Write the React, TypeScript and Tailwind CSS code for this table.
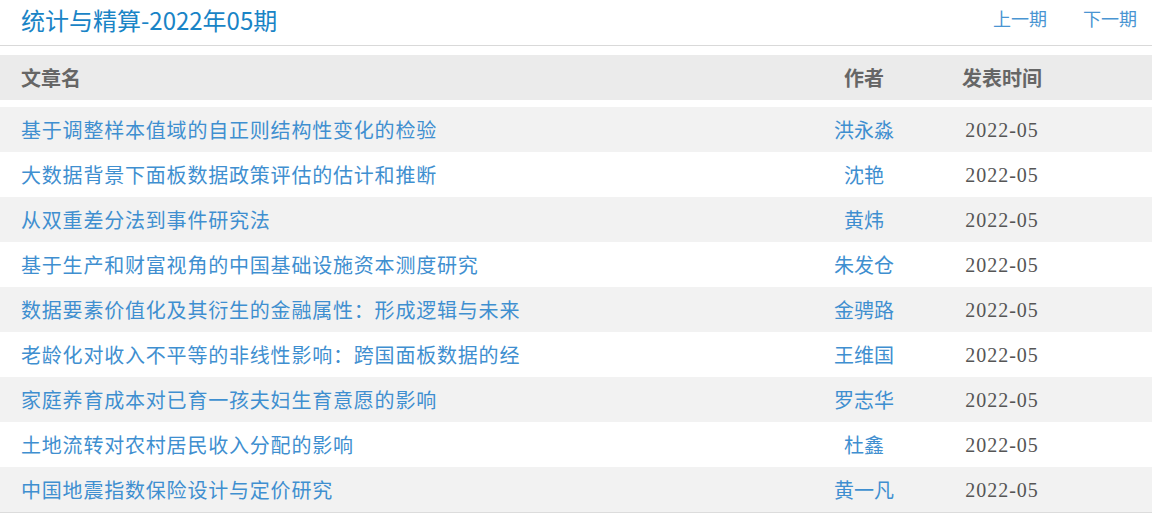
const rows = [
  { title: '基于调整样本值域的自正则结构性变化的检验', author: '洪永淼', date: '2022-05' },
  { title: '大数据背景下面板数据政策评估的估计和推断', author: '沈艳', date: '2022-05' },
  { title: '从双重差分法到事件研究法', author: '黄炜', date: '2022-05' },
  { title: '基于生产和财富视角的中国基础设施资本测度研究', author: '朱发仓', date: '2022-05' },
  { title: '数据要素价值化及其衍生的金融属性：形成逻辑与未来', author: '金骋路', date: '2022-05' },
  { title: '老龄化对收入不平等的非线性影响：跨国面板数据的经', author: '王维国', date: '2022-05' },
  { title: '家庭养育成本对已育一孩夫妇生育意愿的影响', author: '罗志华', date: '2022-05' },
  { title: '土地流转对农村居民收入分配的影响', author: '杜鑫', date: '2022-05' },
  { title: '中国地震指数保险设计与定价研究', author: '黄一凡', date: '2022-05' },
]

const cjk = "font-['Microsoft_YaHei','Noto_Sans_CJK_SC',sans-serif]"

export default function App() {
  return (
    <div className={`w-[1152px] bg-white ${cjk}`}>
      {/* heading */}
      <div className="flex items-center justify-between h-[46px] border-b border-[#d9d9d9] pl-[21px] pr-[15px]">
        <h1 className="text-[24px] leading-none text-[#1984c6] pb-[6px]">统计与精算-2022年05期</h1>
        <div className="flex gap-[36px] text-[18px] leading-none text-[#4a95d2] pb-[9px]">
          <a href="#">上一期</a>
          <a href="#">下一期</a>
        </div>
      </div>

      {/* table */}
      <div className="mt-[9px]">
        <div className="flex items-center h-[45px] bg-[#ebebeb] text-[20px] font-bold text-[#666]">
          <div className="flex-1 pl-[21px]">文章名</div>
          <div className="w-[128px] text-center">作者</div>
          <div className="w-[148px] text-center">发表时间</div>
          <div className="w-[76px]" />
        </div>
        <div className="mt-[7px] border-b border-[#dcdcdc]">
          {rows.map((r, i) => (
            <div
              key={r.title}
              className={`flex items-center h-[45px] ${i % 2 === 0 ? 'bg-[#f2f2f2]' : 'bg-white'}`}
            >
              <a href="#" className="flex-1 pl-[21px] text-[20px] tracking-[0.8px] text-[#3f8fd0] truncate">
                {r.title}
              </a>
              <a href="#" className="w-[128px] text-center text-[20px] text-[#3f8fd0]">
                {r.author}
              </a>
              <div className="w-[148px] text-center text-[20px] tracking-[1px] text-[#555] font-['Liberation_Serif',serif]">
                {r.date}
              </div>
              <div className="w-[76px]" />
            </div>
          ))}
        </div>
      </div>
    </div>
  )
}
